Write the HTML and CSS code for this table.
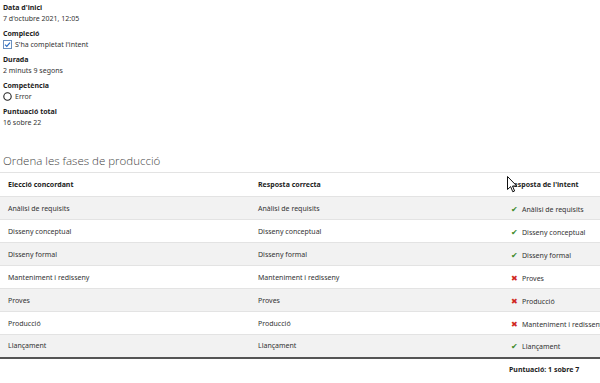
FILE: index.html
```html
<!DOCTYPE html>
<html lang="ca">
<head>
    <meta charset="UTF-8">
    <title>Revisió de l'intent</title>
    <link rel="stylesheet" href="styles.css">
</head>
<body>
    <div class="summary">
        <div class="item">
            <div class="label">Data d'inici</div>
            <div class="value">7 d'octubre 2021, 12:05</div>
        </div>
        <div class="item">
            <div class="label">Compleció</div>
            <div class="value with-icon">
                <svg class="box" width="9" height="9" viewBox="0 0 9 9">
                    <rect x="0.5" y="0.5" width="8" height="8" fill="#fff" stroke="#6b8fbf"/>
                    <polyline points="2,4.6 3.8,6.4 7,2.6" fill="none" stroke="#2b6cc4" stroke-width="1.2"/>
                </svg>
                S'ha completat l'intent
            </div>
        </div>
        <div class="item">
            <div class="label">Durada</div>
            <div class="value">2 minuts 9 segons</div>
        </div>
        <div class="item">
            <div class="label">Competència</div>
            <div class="value with-icon">
                <svg class="box" width="9" height="9" viewBox="0 0 9 9">
                    <circle cx="4.5" cy="4.5" r="3.7" fill="none" stroke="#222" stroke-width="1.1"/>
                </svg>
                Error
            </div>
        </div>
        <div class="item">
            <div class="label">Puntuació total</div>
            <div class="value">16 sobre 22</div>
        </div>
    </div>

    <h2 class="question">Ordena les fases de producció</h2>

    <div class="table-wrap">
        <table class="answers">
            <thead>
                <tr>
                    <th class="col-a">Elecció concordant</th>
                    <th class="col-b">Resposta correcta</th>
                    <th class="col-c">Resposta de l'intent</th>
                </tr>
            </thead>
            <tbody>
                <tr><td>Anàlisi de requisits</td><td>Anàlisi de requisits</td><td><span class="ok">&#10004;</span>Anàlisi de requisits</td></tr>
                <tr><td>Disseny conceptual</td><td>Disseny conceptual</td><td><span class="ok">&#10004;</span>Disseny conceptual</td></tr>
                <tr><td>Disseny formal</td><td>Disseny formal</td><td><span class="ok">&#10004;</span>Disseny formal</td></tr>
                <tr><td>Manteniment i redisseny</td><td>Manteniment i redisseny</td><td><span class="bad">&#10006;</span>Proves</td></tr>
                <tr><td>Proves</td><td>Proves</td><td><span class="bad">&#10006;</span>Producció</td></tr>
                <tr><td>Producció</td><td>Producció</td><td><span class="bad">&#10006;</span>Manteniment i redisseny</td></tr>
                <tr><td>Llançament</td><td>Llançament</td><td><span class="ok">&#10004;</span>Llançament</td></tr>
            </tbody>
            <tfoot>
                <tr><td></td><td></td><td class="score">Puntuació: 1 sobre 7</td></tr>
            </tfoot>
        </table>
        <svg class="cursor" width="11" height="17" viewBox="0 0 11 17">
            <path d="M0.5 0.5 L0.5 13.5 L3.6 10.6 L5.8 15.8 L7.6 15 L5.5 10 L9.8 10 Z" fill="#fff" stroke="#111" stroke-width="1"/>
        </svg>
    </div>
</body>
</html>
```

FILE: styles.css
```css
* {
    margin: 0;
    padding: 0;
    box-sizing: border-box;
}

body {
    font-family: 'Noto Sans', 'Open Sans', sans-serif;
    font-size: 7px;
    color: #333;
    background: #fff;
    overflow: hidden;
    width: 600px;
}

.summary {
    padding: 2px 3px 0;
    display: flex;
    flex-direction: column;
    gap: 4px;
}

.label {
    font-weight: 700;
    color: #1d1d1d;
    line-height: 11px;
}

.value {
    line-height: 11px;
}

.with-icon {
    display: flex;
    align-items: center;
    gap: 3px;
}

.question {
    font-family: 'Open Sans', 'Noto Sans', sans-serif;
    font-weight: 300;
    font-size: 11.5px;
    color: #444;
    margin: 25px 0 0 3px;
    line-height: 16px;
}

.table-wrap {
    position: relative;
    margin-top: 3px;
}

.answers {
    border-collapse: collapse;
    width: 760px;
}

.answers th,
.answers td {
    text-align: left;
    padding: 0 8px;
    height: 23px;
    white-space: nowrap;
    border-top: 1px solid #e3e3e3;
}

.answers th {
    font-weight: 700;
    color: #1d1d1d;
    height: 24px;
}

.col-a { width: 250px; }
.col-b { width: 251px; }

.answers tbody tr:nth-child(odd) td {
    background: #f2f2f2;
}

.answers tbody tr:last-child td {
    border-bottom: 2px solid #555;
}

.answers tfoot td {
    border-top: none;
    font-weight: 700;
    color: #1d1d1d;
}

.ok,
.bad {
    display: inline-block;
    width: 11px;
    margin-left: 2px;
    font-size: 8px;
}

.ok { color: #3b8a2a; }
.bad { color: #d0281e; }

.cursor {
    position: absolute;
    left: 507px;
    top: 4px;
}
```
